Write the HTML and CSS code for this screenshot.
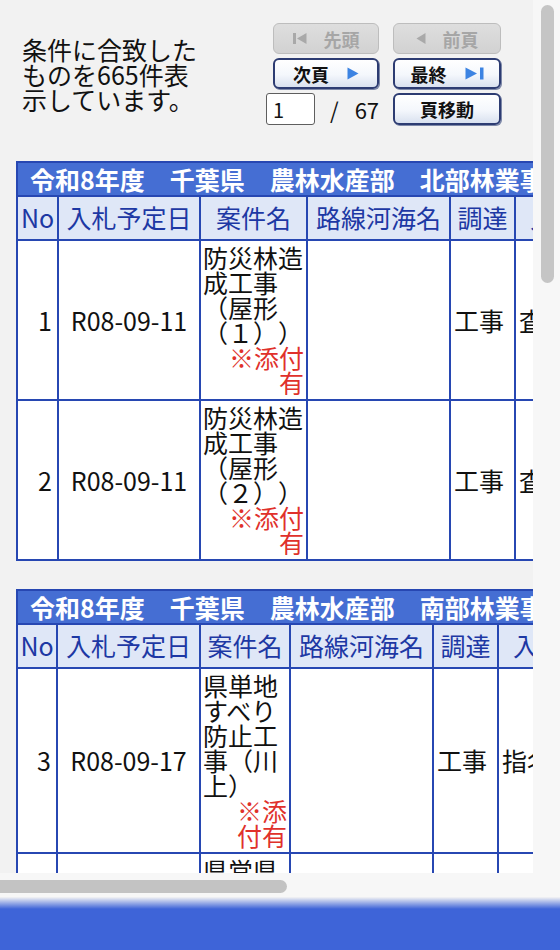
FILE: index.html
```html
<!DOCTYPE html>
<html lang="ja">
<head>
<meta charset="utf-8">
<title>入札予定一覧</title>
<link rel="stylesheet" href="styles.css">
</head>
<body>
<div class="screen">
  <div class="frame">
    <div class="viewport">
      <div class="pager">
        <p class="count">条件に合致したものを665件表示しています。</p>
        <div class="nav">
          <button type="button" class="btn btn-off btn-l">
            <svg class="ico" width="14" height="11" viewBox="0 0 14 11"><rect x="0" y="0" width="3" height="11" fill="#a9a9a9"/><path d="M13.5 0 L4 5.5 L13.5 11Z" fill="#a9a9a9"/></svg>
            <span>先頭</span>
          </button>
          <button type="button" class="btn btn-off">
            <svg class="ico" width="10" height="11" viewBox="0 0 10 11"><path d="M9.5 0 L0.5 5.5 L9.5 11Z" fill="#a9a9a9"/></svg>
            <span>前頁</span>
          </button>
          <button type="button" class="btn btn-l">
            <span>次頁</span>
            <svg class="ico" width="12" height="13" viewBox="0 0 12 13"><path d="M0.5 0.5 L11.5 6.5 L0.5 12.5Z" fill="#3c83e2"/></svg>
          </button>
          <button type="button" class="btn">
            <span>最終</span>
            <svg class="ico" width="19" height="13" viewBox="0 0 19 13"><path d="M0.5 0.5 L12 6.5 L0.5 12.5Z" fill="#3c83e2"/><rect x="15" y="0.5" width="3.5" height="12" fill="#3c83e2"/></svg>
          </button>
          <div class="jump">
            <input class="pageno" type="text" value="1">
            <span class="slash">/</span>
            <span class="total">67</span>
          </div>
          <button type="button" class="btn"><span>頁移動</span></button>
        </div>
      </div>

      <table class="list list-a">
        <colgroup>
          <col class="c-no"><col class="c-date"><col class="c-name"><col class="c-route"><col class="c-type"><col class="c-method"><col class="c-place"><col class="c-rest">
        </colgroup>
        <tr><th class="ttl" colspan="8">令和8年度　千葉県　農林水産部　北部林業事務所</th></tr>
        <tr class="hd"><th>No</th><th>入札予定日</th><th>案件名</th><th>路線河海名</th><th>調達</th><th>入札方式</th><th>施工場所</th><th>備考</th></tr>
        <tr>
          <td class="no">1</td><td class="date">R08-09-11</td>
          <td class="name">防災林造成工事（屋形（１））<div class="note">※添付有</div></td>
          <td></td><td class="type">工事</td><td class="type">査定型指名競争</td><td></td><td></td>
        </tr>
        <tr>
          <td class="no">2</td><td class="date">R08-09-11</td>
          <td class="name">防災林造成工事（屋形（２））<div class="note">※添付有</div></td>
          <td></td><td class="type">工事</td><td class="type">査定型指名競争</td><td></td><td></td>
        </tr>
      </table>

      <table class="list list-b">
        <colgroup>
          <col class="c-no"><col class="c-date"><col class="c-name"><col class="c-route"><col class="c-type"><col class="c-method"><col class="c-place"><col class="c-rest">
        </colgroup>
        <tr><th class="ttl" colspan="8">令和8年度　千葉県　農林水産部　南部林業事務所</th></tr>
        <tr class="hd"><th>No</th><th>入札予定日</th><th>案件名</th><th>路線河海名</th><th>調達</th><th>入札方式</th><th>施工場所</th><th>備考</th></tr>
        <tr>
          <td class="no">3</td><td class="date">R08-09-17</td>
          <td class="name">県単地すべり防止工事（川上）<div class="note">※添付有</div></td>
          <td></td><td class="type">工事</td><td class="type">指名競争</td><td></td><td></td>
        </tr>
        <tr>
          <td class="no">4</td><td class="date">R08-09-17</td>
          <td class="name">県営県有林整備工事<div class="note">※添付有</div></td>
          <td></td><td class="type">工事</td><td class="type">指名競争</td><td></td><td></td>
        </tr>
      </table>
    </div>
    <div class="vbar"><div class="vthumb"></div></div>
    <div class="hbar"><div class="hthumb"></div></div>
    <div class="corner"></div>
  </div>
  <div class="foot"></div>
</div>
</body>
</html>
```

FILE: styles.css
```css
html, body {
  margin: 0;
  padding: 0;
}

body {
  background: #f4f4f4;
  font-family: "Noto Sans CJK JP", "Noto Sans", sans-serif;
  color: #111;
  text-spacing-trim: space-all;
}

.screen {
  width: 560px;
  height: 950px;
  display: flex;
  flex-direction: column;
  background: #f7f7f7;
  overflow: hidden;
}

.frame {
  width: 555px;
  display: grid;
  grid-template-columns: 533px 22px;
  grid-template-rows: 873px 24px;
}

.viewport {
  overflow: hidden;
  background: #f2f2f2;
}

.vbar {
  background: #f7f7f7;
  padding: 5px 1px 0 8px;
}

.vthumb {
  height: 278px;
  border-radius: 7px;
  background: #c5c5c5;
}

.hbar {
  background: #f7f7f7;
  padding-top: 7px;
}

.hthumb {
  width: 287px;
  height: 13px;
  border-radius: 0 7px 7px 0;
  background: #c3c3c3;
}

.corner {
  background: #f7f7f7;
}

.foot {
  flex: 1;
  background: linear-gradient(#f4f4f4 0px, #3e64d8 12px);
}

/* pager */
.pager {
  display: flex;
  align-items: center;
  padding: 23px 0 0 22px;
}

.count {
  margin: 0;
  width: 176px;
  font-size: 25px;
  line-height: 25px;
  color: #111;
}

.nav {
  margin-left: 68px;
  display: grid;
  grid-template-columns: 120px 108px;
  grid-template-rows: 31px 31px 32px;
  column-gap: 7px;
  row-gap: 4px;
}

.btn {
  box-sizing: border-box;
  margin: 0;
  padding: 0;
  height: 100%;
  display: flex;
  align-items: center;
  justify-content: center;
  gap: 18px;
  border: 2px solid #2d3c72;
  border-radius: 6px;
  background: linear-gradient(#ffffff 0%, #f4f7fc 55%, #d9e1ef 100%);
  box-shadow: 1px 1px 0 #7d88a8;
  font-family: "Noto Sans CJK JP", sans-serif;
  font-size: 18px;
  font-weight: bold;
  line-height: 1;
  color: #111;
}

.btn-l {
  margin-left: 7px;
  width: 106px;
}

.btn-off {
  border: 1.5px solid #bdbdbd;
  background: linear-gradient(#dedede, #d2d2d2);
  box-shadow: none;
  color: #a6a6a6;
  gap: 17px;
}

.ico {
  display: block;
  flex: none;
}

.jump {
  display: flex;
  align-items: center;
}

.pageno {
  box-sizing: border-box;
  width: 49px;
  height: 32px;
  margin: 0;
  padding: 0 0 0 6px;
  border: 1.5px solid #5e5e5e;
  border-radius: 3px;
  background: #fff;
  font-family: "Noto Sans CJK JP", sans-serif;
  font-size: 20px;
  color: #111;
}

.slash {
  margin-left: 15px;
  font-size: 22px;
  color: #111;
}

.total {
  margin-left: 16px;
  font-size: 22px;
  color: #111;
}

/* tables */
.list {
  border-collapse: collapse;
  table-layout: fixed;
  width: 908px;
  margin-left: 16px;
  background: #fff;
}

.list-a {
  margin-top: 36px;
}

.list-b {
  margin-top: 28px;
}

.list th,
.list td {
  border: 2px solid #2747b2;
  font-size: 25px;
  line-height: 25px;
}

.list .ttl {
  background: #456ed3;
  color: #fff;
  font-weight: bold;
  text-align: left;
  white-space: nowrap;
  padding: 4px 0 3px 12px;
  overflow: hidden;
}

.list .hd th {
  background: #dfe7f7;
  color: #1d38a4;
  font-weight: normal;
  text-align: center;
  white-space: nowrap;
  padding: 8px 2px 9px;
  overflow: hidden;
}

.list td {
  background: #fff;
  padding: 4px 2px;
  vertical-align: middle;
  color: #111;
}

.list td.no {
  text-align: right;
  padding-right: 5px;
}

.list td.date {
  text-align: center;
  white-space: nowrap;
}

.list td.name {
  text-align: left;
  padding-left: 2px;
  padding-right: 2px;
}

.list td.type {
  text-align: left;
  padding-left: 3px;
  white-space: nowrap;
  overflow: hidden;
}

.note {
  margin-left: 10px;
  text-align: right;
  color: #e0312b;
}

.list-a .c-no { width: 41px; }
.list-a .c-date { width: 142px; }
.list-a .c-name { width: 107px; }
.list-a .c-route { width: 143px; }
.list-a .c-type { width: 65px; }
.list-a .c-method { width: 130px; }
.list-a .c-place { width: 140px; }
.list-a .c-rest { width: 140px; }

.list-b .c-no { width: 40px; }
.list-b .c-date { width: 143px; }
.list-b .c-name { width: 90px; }
.list-b .c-route { width: 143px; }
.list-b .c-type { width: 65px; }
.list-b .c-method { width: 130px; }
.list-b .c-place { width: 157px; }
.list-b .c-rest { width: 140px; }
```
